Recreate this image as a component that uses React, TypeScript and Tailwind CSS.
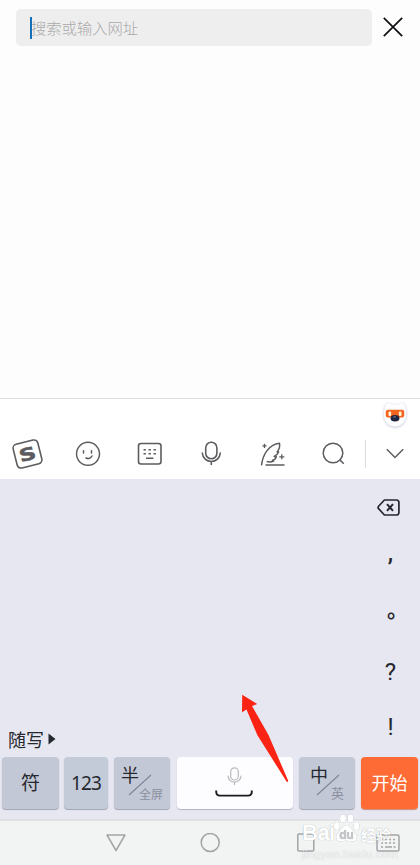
import React from "react";

const SogouIcon = () => (
  <svg width="32" height="32" viewBox="0 0 32 32">
    <g transform="rotate(-14 16 16)">
      <rect x="3.300" y="3.800" width="25.400" height="24.400" rx="4" fill="none" stroke="#5c5c60" strokeWidth="1.600" />
      <text
        transform="translate(16 22.300) scale(1.350 1)"
        textAnchor="middle"
        fontFamily="DejaVu Sans, sans-serif"
        fontSize="17.500"
        fontWeight="700"
        fill="#5c5c60"
        stroke="#5c5c60"
        strokeWidth=".5"
      >
        S
      </text>
    </g>
  </svg>
);

const SmileIcon = () => (
  <svg width="26" height="26" viewBox="0 0 26 26" fill="none" stroke="#5c5c60" strokeWidth="1.5" strokeLinecap="round">
    <circle cx="12.500" cy="12.800" r="11.500" />
    <path d="M8 9.800v2.200M16 9.800v2.200M10.500 17c2 1.200 4.600.6 6-2" />
  </svg>
);

const BoardIcon = () => (
  <svg width="26" height="26" viewBox="0 0 26 26" fill="none" stroke="#5c5c60" strokeWidth="1.600">
    <rect x="2" y="2.500" width="22.500" height="20.500" rx="2.500" />
    <path d="M7 8.800h2.400M12 8.800h2.400M17 8.800h2.400M7 12.800h2.400M12 12.800h2.400M17 12.800h2.400M9.500 17.200h7.400" />
  </svg>
);

const MicIcon = () => (
  <svg width="22" height="26" viewBox="0 0 22 26" fill="none" stroke="#5c5c60" strokeWidth="1.600" strokeLinecap="round">
    <rect x="5.200" y="1.300" width="11.200" height="16.500" rx="5.600" />
    <path d="M1.800 12c.4 5 4.300 8.500 9 8.500s8.600-3.500 9-8.500M10.800 20.500v3" />
  </svg>
);

const FeatherIcon = () => (
  <svg width="26" height="26" viewBox="0 0 26 26" fill="none" stroke="#5c5c60" strokeWidth="1.500" strokeLinejoin="round">
    <path d="M2 24.300C3.200 14 9 3.500 20 2.300c.6 3.600-.6 6.500-2.400 8.600l1.500.2c-.9 2.300-2.500 3.500-4.400 4.300l2.100.4c-.6 2.200-1.900 3.200-3.900 3.500l1.300.8c-2.200 1-4.700 1-7 .5M6 24h19" />
    <path d="M5 2.700v4.200M2.900 4.800h4.200M22.300 13.300v5M19.800 15.800h5" strokeWidth="1.300" />
  </svg>
);

const SearchIcon = () => (
  <svg width="26" height="26" viewBox="0 0 26 26" fill="none" stroke="#5c5c60" strokeWidth="1.500">
    <circle cx="12.500" cy="12" r="9.800" />
    <path d="M19.100 18.600l4.200 4.200" />
  </svg>
);

const Mascot = () => (
  <svg width="26" height="26" viewBox="0 0 26 26" className="drop-shadow-[0_1px_1px_rgba(90,110,150,0.3)]">
    <path d="M4 1.200l3-.4 2.500 1.400h7l2.500-1.400 3 .4C24 5 25 11 24 15.500 22.500 21.500 18 24.500 13 24.500S3.500 21.500 2 15.500C1 11 2 5 4 1.200z" fill="#fdfdff" stroke="#e8e9f0" strokeWidth=".5" />
    <rect x="3.800" y="7.800" width="18.400" height="7.800" rx="2" fill="#f4661f" />
    <rect x="6.500" y="9.500" width="2.600" height="4.500" rx="1" fill="#fff5d8" />
    <rect x="16.900" y="9.500" width="2.600" height="4.500" rx="1" fill="#fff5d8" />
    <ellipse cx="13" cy="16.300" rx="4.400" ry="3.300" fill="#20263f" />
    <ellipse cx="12.600" cy="15" rx="1.600" ry=".7" fill="#68739a" />
  </svg>
);

const BackspaceIcon = () => (
  <svg width="23" height="17" viewBox="0 0 23 17" fill="none" stroke="#26282f" strokeWidth="1.700" strokeLinejoin="round">
    <path d="M7.400 1h12.100a2.400 2.400 0 012.400 2.400v10.200a2.400 2.400 0 01-2.400 2.400H7.400L1.600 9.700a1.800 1.800 0 010-2.400z" />
    <path d="M10 5.200l6 6.600M16 5.200l-6 6.600" strokeWidth="2" />
  </svg>
);

const Watermark = () => (
  <div className="absolute top-[-10px] left-[302px] h-[55px] w-[118px] text-white">
    <div className="flex h-[36px] items-end font-['Liberation_Sans','Noto_Sans_CJK_SC',sans-serif] leading-none font-bold [text-shadow:0_0_1px_rgba(120,128,130,0.75)]">
      <span className="w-[31px] pb-[3px] text-[22px] tracking-[-0.500px]">Bai</span>
      <svg width="27" height="31" viewBox="0 0 27 31" className="mb-[3px] drop-shadow-[0_0_0.500px_rgba(120,128,130,0.800)]">
        <g fill="#fff">
          <ellipse cx="3.800" cy="13" rx="3" ry="4" />
          <ellipse cx="10" cy="5.500" rx="3" ry="4.300" />
          <ellipse cx="17.500" cy="5.500" rx="3" ry="4.300" />
          <ellipse cx="23.500" cy="13" rx="3" ry="4" />
          <path d="M13.500 12c4 0 4.200 4.200 7.500 6.700 4.600 3.600 3.500 9.800-2 9.800-2.200 0-3-.7-5.500-.7s-3.300.7-5.500.7c-5.500 0-6.600-6.200-2-9.800C9.300 16.200 9.500 12 13.500 12z" />
        </g>
        <text x="13.500" y="25.500" textAnchor="middle" fontSize="12" fontWeight="700" fontFamily="Liberation Sans, sans-serif" fill="#c4c7c8">
          du
        </text>
      </svg>
      <span className="pb-[4px] pl-[1px] text-[15px]">经验</span>
    </div>
    <p className="mt-[1px] font-['Liberation_Sans',sans-serif] text-[11.500px] leading-[13px] tracking-[0.200px] whitespace-nowrap text-white/80 [text-shadow:0_0_1px_rgba(120,128,130,0.500)]">
      jingyan.baidu.com
    </p>
  </div>
);

const tools = [SogouIcon, SmileIcon, BoardIcon, MicIcon, FeatherIcon, SearchIcon];

const App = () => {
  return (
    <div className="relative flex h-[865px] w-[420px] flex-col overflow-hidden bg-[#fdfdfd] font-[Roboto,'Noto_Sans_CJK_SC',sans-serif]">
      <header className="flex h-[398px] items-start pt-[9px] pl-4">
        <div className="flex h-[37px] w-[356px] items-center rounded-[5px] bg-[#efeeee] pl-[14px]">
          <span className="h-[22px] w-[2px] shrink-0 bg-[#1670b8]"></span>
          <span className="-ml-px font-['Noto_Sans_CJK_SC',sans-serif] text-[15.300px] leading-none font-light text-[#aaaaac]">
            搜索或输入网址
          </span>
        </div>
        <button className="mt-[8px] ml-[11px]">
          <svg width="20" height="20" viewBox="0 0 20 20" stroke="#101014" strokeWidth="1.700">
            <path d="M.8.8l18.400 18.400M19.200.8L.8 19.200" />
          </svg>
        </button>
      </header>

      <section className="flex h-[81px] flex-col border-t border-[#dfdfe0] bg-white">
        <div className="flex h-[29px] justify-end pt-[3px] pr-[12px]">
          <Mascot />
        </div>
        <div className="flex h-[51px] items-center">
          <div className="flex w-[365px] -translate-x-[3.500px]">
            {tools.map((Tool, i) => (
              <button key={i} className="flex w-[61.300px] shrink-0 items-center justify-center">
                <Tool />
              </button>
            ))}
          </div>
          <span className="h-[28px] w-px bg-[#dcdcde]"></span>
          <button className="pl-[20px]">
            <svg width="18" height="11" viewBox="0 0 18 11" fill="none" stroke="#5c5c60" strokeWidth="1.500">
              <path d="M.8 1.200L9 9.500l8.200-8.300" />
            </svg>
          </button>
        </div>
      </section>

      <section className="flex h-[340px] flex-col bg-[#e6e7f1] text-[#26282f]">
        <div className="flex h-[278px] justify-between">
          <div className="flex items-end pb-[4px] pl-[8px]">
            <span className="text-[18px] leading-[24px]">随写</span>
            <svg width="8" height="12" viewBox="0 0 8 12" className="mb-[8px] ml-[4px]">
              <path d="M.5.5L7.500 6 .5 11.500z" fill="#26282f" />
            </svg>
          </div>
          <div className="flex w-[59px] flex-col items-center text-[24px] leading-none">
            <button className="flex h-[54px] items-center pt-[2px] pr-[5px]">
              <BackspaceIcon />
            </button>
            <button className="flex h-[55px] items-center pb-[15px] font-medium">,</button>
            <button className="flex h-[55px] items-center pb-[15px] pl-[14px] font-['Noto_Sans_CJK_SC',sans-serif] text-[21px] font-bold">。</button>
            <button className="flex h-[55px] items-center pt-[2px]">?</button>
            <button className="flex h-[55px] items-center pt-[2px]">!</button>
          </div>
        </div>
        <div className="flex h-[52px] pl-[2px] text-[19px] leading-none">
          <button className="w-[57px] rounded-[4px] bg-[#c3c8d7] pt-[1px] shadow-[0_1px_1px_#9fa3b0]">符</button>
          <button className="ml-[5px] w-[44px] rounded-[4px] bg-[#c3cbd9] font-['Noto_Sans',sans-serif] text-[19px] tracking-[-0.800px] shadow-[0_1px_1px_#9fa3b0]">
            123
          </button>
          <button className="relative ml-[6px] w-[56px] rounded-[4px] bg-[#c3c8d7] shadow-[0_1px_1px_#9fa3b0]">
            <span className="absolute top-[10px] left-[7px] text-[18px]">半</span>
            <svg width="24" height="22" viewBox="0 0 24 22" className="absolute top-[17px] left-[14px]">
              <path d="M1 21L23 1" stroke="#7f8594" strokeWidth="1.100" />
            </svg>
            <span className="absolute top-[32px] left-[25px] text-[12px] text-[#8b90a0]">全屏</span>
          </button>
          <button className="ml-[7px] flex w-[116px] flex-col items-center rounded-[4px] bg-[#fdfdff] pt-[10px] pr-[2px] shadow-[0_1px_1px_#b2b5c0]">
            <svg width="15" height="19" viewBox="0 0 15 19" fill="none" stroke="#b9babd" strokeWidth="1.200" strokeLinecap="round">
              <rect x="3.700" y=".8" width="7.600" height="12.200" rx="3.800" />
              <path d="M1 9c.2 3.500 3 6.200 6.500 6.200S13.800 12.500 14 9M7.500 15.200v2.400" />
            </svg>
            <svg width="38" height="7" viewBox="0 0 38 7" fill="none" stroke="#1c1c20" strokeWidth="1.900" className="mt-[4px]">
              <path d="M1.200.5v1.300C1.200 4.300 2.500 5.600 5 5.600h28c2.500 0 3.800-1.300 3.800-3.800V.5" />
            </svg>
          </button>
          <button className="relative ml-[6px] w-[56px] rounded-[4px] bg-[#c3c8d7] shadow-[0_1px_1px_#9fa3b0]">
            <span className="absolute top-[10px] left-[11px] text-[18px]">中</span>
            <svg width="24" height="22" viewBox="0 0 24 22" className="absolute top-[17px] left-[17px]">
              <path d="M1 21L23 1" stroke="#7f8594" strokeWidth="1.100" />
            </svg>
            <span className="absolute top-[30px] left-[32px] text-[13px] text-[#8b90a0]">英</span>
          </button>
          <button className="ml-[6px] w-[57px] rounded-[4px] bg-[#ff6b35] pt-[1px] text-[18px] text-white shadow-[0_1px_1px_#c98a78]">开始</button>
        </div>
      </section>

      <footer className="relative h-[46px] border-t-2 border-[#e0e1e5] bg-[#f2f4f4]">
        <div className="flex h-[43px] items-center">
          <svg width="20" height="18" viewBox="0 0 20 18" fill="none" stroke="#a3a4a6" strokeWidth="1.500" strokeLinejoin="round" className="ml-[106px]">
            <path d="M1 1h18l-9 15.500z" />
          </svg>
          <svg width="20" height="20" viewBox="0 0 20 20" fill="none" stroke="#a3a4a6" strokeWidth="1.500" className="ml-[74px]">
            <circle cx="10.200" cy="9.500" r="9" />
          </svg>
          <svg width="18" height="20" viewBox="0 0 18 20" fill="none" stroke="#a3a4a6" strokeWidth="1.500" className="ml-[77px]">
            <rect x=".8" y="1" width="16" height="17" rx="1" />
          </svg>
          <svg width="24" height="18" viewBox="0 0 24 18" fill="none" stroke="#a3a4a6" strokeWidth="1.500" className="ml-[61px]">
            <rect x="1" y="1" width="22" height="16" rx="1.500" />
            <path d="M5 5.500h14M5 9h14" strokeDasharray="2 2" />
            <path d="M5 13h2M9 13h7M17.500 13h2" />
          </svg>
        </div>
        <Watermark />
      </footer>

      <svg width="48" height="89" viewBox="0 0 48 89" className="pointer-events-none absolute top-[694px] left-[241px]">
        <path d="M1.200.8L16.200 10 11 12 27.500 41 47.300 87 46 88.300 16.300 41 5.500 15.500 1 18.300z" fill="#fb2414" />
      </svg>
    </div>
  );
};

export default App;
